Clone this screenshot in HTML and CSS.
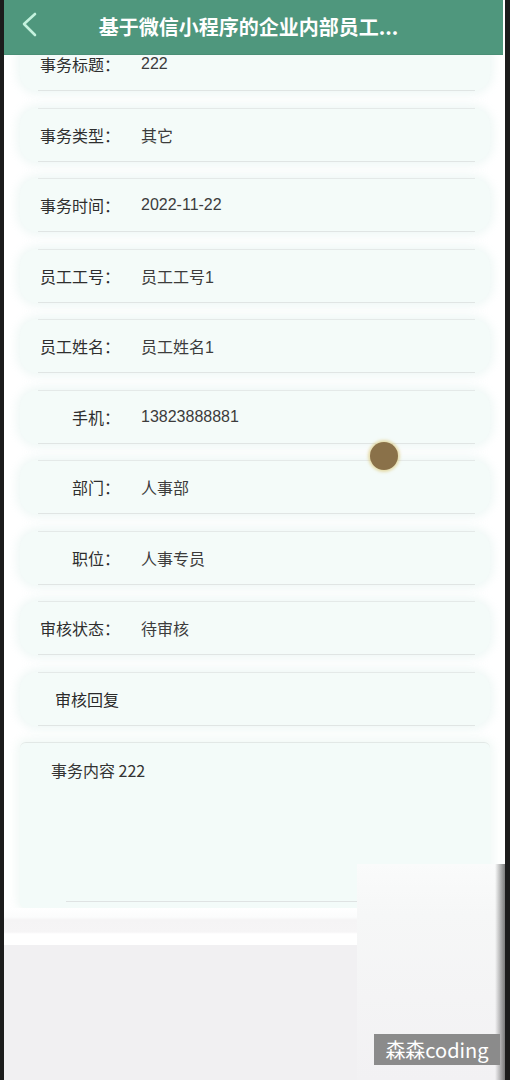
FILE: index.html
```html
<!DOCTYPE html>
<html lang="zh">
<head>
<meta charset="utf-8">
<title>事务详情</title>
<link rel="stylesheet" href="styles.css">
</head>
<body>
<div class="screen">
  <div class="content">
    <div class="row"><div class="row-line"><span class="label">事务标题：</span><span class="value">222</span></div></div>
    <div class="row"><div class="row-line"><span class="label">事务类型：</span><span class="value">其它</span></div></div>
    <div class="row"><div class="row-line"><span class="label">事务时间：</span><span class="value">2022-11-22</span></div></div>
    <div class="row"><div class="row-line"><span class="label">员工工号：</span><span class="value">员工工号1</span></div></div>
    <div class="row"><div class="row-line"><span class="label">员工姓名：</span><span class="value">员工姓名1</span></div></div>
    <div class="row"><div class="row-line"><span class="label">手机：</span><span class="value">13823888881</span></div></div>
    <div class="row"><div class="row-line"><span class="label">部门：</span><span class="value">人事部</span></div></div>
    <div class="row"><div class="row-line"><span class="label">职位：</span><span class="value">人事专员</span></div></div>
    <div class="row"><div class="row-line"><span class="label">审核状态：</span><span class="value">待审核</span></div></div>
    <div class="row"><div class="row-line"><span class="reply">审核回复</span></div></div>
    <div class="textarea">
      <div class="textarea-text">事务内容 222</div>
      <div class="textarea-line"></div>
    </div>
    <div class="gap-band"></div>
    <div class="footer"></div>
  </div>

  <div class="header">
    <svg class="back" width="20" height="26" viewBox="0 0 20 26">
      <polyline points="15,2 4,12 15,23" fill="none" stroke="#c4f2de" stroke-width="2.6" stroke-linecap="round" stroke-linejoin="round"/>
    </svg>
    <div class="title">基于微信小程序的企业内部员工...</div>
  </div>

  <div class="touch-dot"></div>
  <div class="video-overlay"></div>
  <div class="watermark">森森coding</div>
</div>
</body>
</html>
```

FILE: styles.css
```css
html, body {
  margin: 0;
  padding: 0;
}

body {
  background: #1c1c1c;
  width: 510px;
  height: 1080px;
  overflow: hidden;
  font-family: "Liberation Sans", "Noto Sans CJK SC", sans-serif;
}

.screen {
  position: relative;
  margin-left: 4px;
  width: 501px;
  height: 1080px;
  background: #ffffff;
  overflow: hidden;
}

.header {
  position: absolute;
  top: 0;
  left: 0;
  width: 499px;
  height: 55px;
  background: #4f977d;
  border-bottom: 1px solid #4a8f76;
  box-sizing: border-box;
  display: flex;
  align-items: center;
}

.back {
  margin-left: 16px;
  margin-top: -4px;
}

.title {
  flex: 1;
  text-align: center;
  color: #ffffff;
  font-family: "Noto Sans CJK SC", sans-serif;
  font-weight: 700;
  font-size: 20px;
  margin-right: 46px;
  margin-top: -1px;
  white-space: nowrap;
}

.content {
  padding-top: 37px;
}

.row {
  height: 54px;
  margin: 0 15px 16.5px 16px;
  background: #f4fbf9;
  border-radius: 18px;
  box-shadow: 0 0 10px 3px rgba(234, 245, 242, 0.8);
}

.row-line {
  height: 54px;
  box-sizing: border-box;
  margin: 0 15px 0 18px;
  border-top: 1px solid #e4e9e8;
  border-bottom: 1px solid #e0e5e4;
  display: flex;
  align-items: center;
}

.label {
  flex: 0 0 82px;
  white-space: nowrap;
  text-align: right;
  font-size: 16px;
  color: #2e2e2e;
  font-family: "Noto Sans CJK SC", sans-serif;
}

.value {
  margin-left: 21px;
  white-space: nowrap;
  font-size: 16px;
  color: #3c3c3c;
  font-family: "Liberation Sans", "Noto Sans CJK SC", sans-serif;
}

.reply {
  margin-left: 17px;
  font-size: 16px;
  color: #2a2a2a;
  font-family: "Noto Sans CJK SC", sans-serif;
}

.textarea {
  height: 166px;
  margin: 0 15px 0 16px;
  background: #f3fbf9;
  border-radius: 6px;
  border-top: 1px solid #e2e8e6;
  box-shadow: 0 0 10px 3px rgba(236, 246, 243, 0.8);
  box-sizing: border-box;
  display: flex;
  flex-direction: column;
}

.textarea-text {
  padding: 15px 0 0 31px;
  font-size: 16px;
  color: #333333;
  font-family: "Noto Sans CJK SC", sans-serif;
  flex: 1;
}

.textarea-line {
  height: 0;
  margin: 0 20px 6px 46px;
  border-top: 1px solid #dfe3e3;
}

.gap-band {
  height: 37px;
  background: linear-gradient(#ffffff 0, #fbfcfc 9px, #f5f4f5 12px, #f6f5f6 24px, #ffffff 26px);
}

.footer {
  height: 140px;
  background: #f1f0f2;
}

.touch-dot {
  position: absolute;
  left: 366px;
  top: 442px;
  width: 28px;
  height: 28px;
  border-radius: 50%;
  background: #8a7149;
  box-shadow: 0 0 3px 2px rgba(220, 200, 120, 0.6);
}

.video-overlay {
  position: absolute;
  left: 353px;
  top: 864px;
  width: 148px;
  height: 216px;
  background: linear-gradient(180deg, #fafbfb 0, #f6f7f7 50px, #f2f1f3 100%);
}

.video-overlay::after {
  content: "";
  position: absolute;
  right: 0;
  top: 0;
  bottom: 0;
  width: 10px;
  background: linear-gradient(90deg, rgba(0,0,0,0), rgba(40,40,40,0.6));
}

.watermark {
  position: absolute;
  left: 370px;
  top: 1034px;
  width: 126px;
  height: 31px;
  background: #8b8b8b;
  color: #ffffff;
  font-family: "Noto Sans CJK SC", sans-serif;
  font-size: 20px;
  line-height: 31px;
  text-align: center;
}
```
